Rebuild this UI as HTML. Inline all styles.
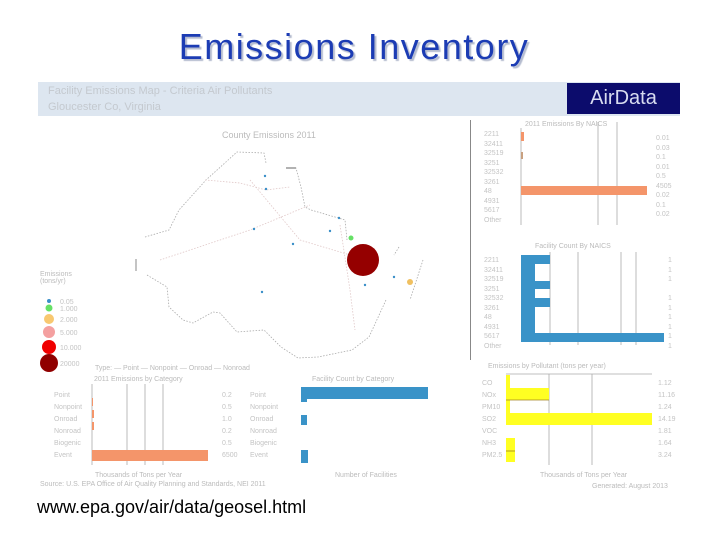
<!DOCTYPE html>
<html><head><meta charset="utf-8"><style>
body{margin:0;width:720px;height:540px;background:#fff;position:relative;overflow:hidden;font-family:"Liberation Sans",sans-serif}
.a{position:absolute}
.t{color:#bbb;font-size:7px;white-space:nowrap}
.c{color:#c4c4c4;font-size:7px;line-height:9.5px;white-space:pre;position:absolute}
</style></head><body>
<div class="a" style="left:0;width:708px;top:26px;text-align:center;font-size:36px;color:#1c3cb4;text-shadow:2px 2px 1px #b5bccf;letter-spacing:1.5px">Emissions Inventory</div>
<div class="a" style="left:38px;top:82px;width:642px;height:34px;background:#dde6f0"></div>
<div class="a t" style="left:48px;top:85px;font-size:11px;color:#c4c9cf">Facility Emissions Map - Criteria Air Pollutants</div>
<div class="a t" style="left:48px;top:101px;font-size:11px;color:#c4c9cf">Gloucester Co, Virginia</div>
<div class="a" style="left:567px;top:83px;width:113px;height:31px;background:#0c0c6c;color:#d8dcf0;font-size:20px;text-align:center;line-height:31px">AirData</div>
<div class="a" style="left:470px;top:120px;width:1px;height:240px;background:#888"></div>
<svg class="a" style="left:0;top:0" width="720" height="540">
<g fill="none" stroke="#aaa" stroke-width="0.8" stroke-dasharray="1.5,1.5">
<polyline points="145,237 169,230 179,210 206,180 237,152 264,153 266,163"/>
<polyline points="286,168 296,168 301,187 305,207 311,210 335,217 345,220 347,240"/>
<polyline points="147,275 167,287 169,307 183,320 193,323 213,312 220,313 237,332 264,330 281,347 298,358 318,357 352,350 369,337 386,300"/>
<polyline points="423,260 410,300" /><polyline points="399,247 394,255"/>
<polyline points="205,180 240,183 266,190 290,187" stroke="#e0c8c8"/>
<polyline points="160,260 250,230 310,205" stroke="#e0c8c8"/>
<polyline points="250,180 300,240 350,255" stroke="#e0c8c8"/>
<polyline points="340,225 350,290 355,330" stroke="#e0c8c8"/>
</g>
<line x1="136" y1="259" x2="136" y2="271" stroke="#888"/>
<line x1="286" y1="168" x2="296" y2="168" stroke="#666"/>
<g fill="#3a8fc8">
<circle cx="265" cy="176" r="1.2"/><circle cx="266" cy="189" r="1.2"/><circle cx="254" cy="229" r="1.2"/><circle cx="293" cy="244" r="1.2"/><circle cx="262" cy="292" r="1.2"/><circle cx="339" cy="218" r="1.2"/><circle cx="330" cy="231" r="1.2"/><circle cx="365" cy="285" r="1.2"/><circle cx="394" cy="277" r="1.2"/><circle cx="349" cy="255" r="1.2"/>
</g>
<circle cx="351" cy="238" r="2.5" fill="#66e066"/>
<circle cx="410" cy="282" r="3" fill="#f0c060"/>
<circle cx="363" cy="260" r="16" fill="#950000"/>
<circle cx="49" cy="301" r="2" fill="#3a8fc8"/>
<circle cx="49" cy="308" r="3.5" fill="#66e066"/>
<circle cx="49" cy="319" r="5" fill="#f8c870"/>
<circle cx="49" cy="332" r="6" fill="#f4a0a0"/>
<circle cx="49" cy="347" r="7" fill="#f00000"/>
<circle cx="49" cy="363" r="9" fill="#900000"/>
<g fill="#c4c4c4" font-size="7" font-family="Liberation Sans">
<text x="60" y="304">0.05</text><text x="60" y="311">1.000</text><text x="60" y="322">2.000</text><text x="60" y="335">5.000</text><text x="60" y="350">10.000</text><text x="60" y="366">20000</text>
</g>
<g stroke="#aaa" stroke-width="0.8"><line x1="598" y1="122" x2="598" y2="225"/><line x1="617" y1="122" x2="617" y2="225"/><line x1="521" y1="128" x2="521" y2="225"/></g>
<rect x="521" y="132" width="3" height="9" fill="#f4956a"/>
<rect x="521" y="152" width="2" height="7" fill="#c8a080"/>
<rect x="521" y="186" width="126" height="9" fill="#f4956a"/>
<g stroke="#aaa" stroke-width="0.8"><line x1="550" y1="252" x2="550" y2="345"/><line x1="578" y1="252" x2="578" y2="345"/><line x1="621" y1="252" x2="621" y2="345"/><line x1="636" y1="252" x2="636" y2="345"/></g>
<rect x="521" y="255" width="14" height="87" fill="#3a93c8"/>
<rect x="521" y="255" width="29" height="9" fill="#3a93c8"/>
<rect x="521" y="281" width="29" height="8" fill="#3a93c8"/>
<rect x="521" y="298" width="29" height="9" fill="#3a93c8"/>
<rect x="521" y="333" width="143" height="9" fill="#3a93c8"/>
<g stroke="#aaa" stroke-width="0.8"><line x1="127" y1="384" x2="127" y2="465"/><line x1="145" y1="384" x2="145" y2="465"/><line x1="163" y1="384" x2="163" y2="465"/><line x1="92" y1="384" x2="92" y2="465"/></g>
<rect x="92" y="398" width="1" height="8" fill="#f4956a"/><rect x="92" y="410" width="2" height="8" fill="#f4956a"/><rect x="92" y="422" width="2" height="8" fill="#f4956a"/>
<rect x="92" y="450" width="116" height="11" fill="#f4956a"/>
<rect x="301" y="387" width="127" height="12" fill="#3a93c8"/>
<rect x="301" y="399" width="6" height="3" fill="#3a93c8"/>
<rect x="301" y="415" width="6" height="10" fill="#3a93c8"/>
<rect x="301" y="450" width="7" height="13" fill="#3a93c8"/>
<g stroke="#aaa" stroke-width="0.8"><line x1="549" y1="374" x2="549" y2="465"/><line x1="592" y1="374" x2="592" y2="465"/><line x1="506" y1="374" x2="652" y2="374"/></g>
<rect x="506" y="375" width="4" height="50" fill="#ffff22"/>
<rect x="506" y="388" width="43" height="12" fill="#ffff22"/>
<line x1="506" y1="400" x2="549" y2="400" stroke="#a08020" stroke-width="0.8"/>
<rect x="506" y="413" width="146" height="12" fill="#ffff22"/>
<rect x="506" y="438" width="9" height="24" fill="#ffff22"/>
<line x1="506" y1="451" x2="515" y2="451" stroke="#a08020" stroke-width="0.8"/>
</svg>
<div class="a t" style="left:222px;top:130px;font-size:9px">County Emissions 2011</div>
<div class="a t" style="left:525px;top:121px">2011 Emissions By NAICS</div>
<div class="a t" style="left:535px;top:243px">Facility Count By NAICS</div>
<div class="a t" style="left:40px;top:271px">Emissions<br>(tons/yr)</div>
<div class="c" style="left:484px;top:130px">2211
32411
32519
3251
32532
3261
48
4931
5617
Other</div>
<div class="c" style="left:656px;top:134px">0.01
0.03
0.1
0.01
0.5
4505
0.02
0.1
0.02</div>
<div class="c" style="left:484px;top:256px">2211
32411
32519
3251
32532
3261
48
4931
5617
Other</div>
<div class="c" style="left:668px;top:256px">1
1
1

1
1
1
1
1
1</div>
<div class="c" style="left:54px;top:390px;line-height:12px">Point
Nonpoint
Onroad
Nonroad
Biogenic
Event</div>
<div class="c" style="left:222px;top:390px;line-height:12px">0.2
0.5
1.0
0.2
0.5
6500</div>
<div class="c" style="left:250px;top:390px;line-height:12px">Point
Nonpoint
Onroad
Nonroad
Biogenic
Event</div>
<div class="c" style="left:482px;top:378px;line-height:12px">CO
NOx
PM10
SO2
VOC
NH3
PM2.5</div>
<div class="c" style="left:658px;top:378px;line-height:12px">1.12
11.16
1.24
14.19
1.81
1.64
3.24</div>
<div class="a t" style="left:95px;top:365px">Type: — Point — Nonpoint — Onroad — Nonroad</div>
<div class="a t" style="left:94px;top:376px">2011 Emissions by Category</div>
<div class="a t" style="left:312px;top:376px">Facility Count by Category</div>
<div class="a t" style="left:488px;top:363px">Emissions by Pollutant (tons per year)</div>
<div class="a t" style="left:95px;top:472px">Thousands of Tons per Year</div>
<div class="a t" style="left:335px;top:472px">Number of Facilities</div>
<div class="a t" style="left:540px;top:472px">Thousands of Tons per Year</div>
<div class="a t" style="left:40px;top:481px">Source: U.S. EPA Office of Air Quality Planning and Standards, NEI 2011</div>
<div class="a t" style="left:592px;top:483px">Generated: August 2013</div>
<div class="a" style="left:37px;top:497px;font-size:18px;color:#000">www.epa.gov/air/data/geosel.html</div>
</body></html>
